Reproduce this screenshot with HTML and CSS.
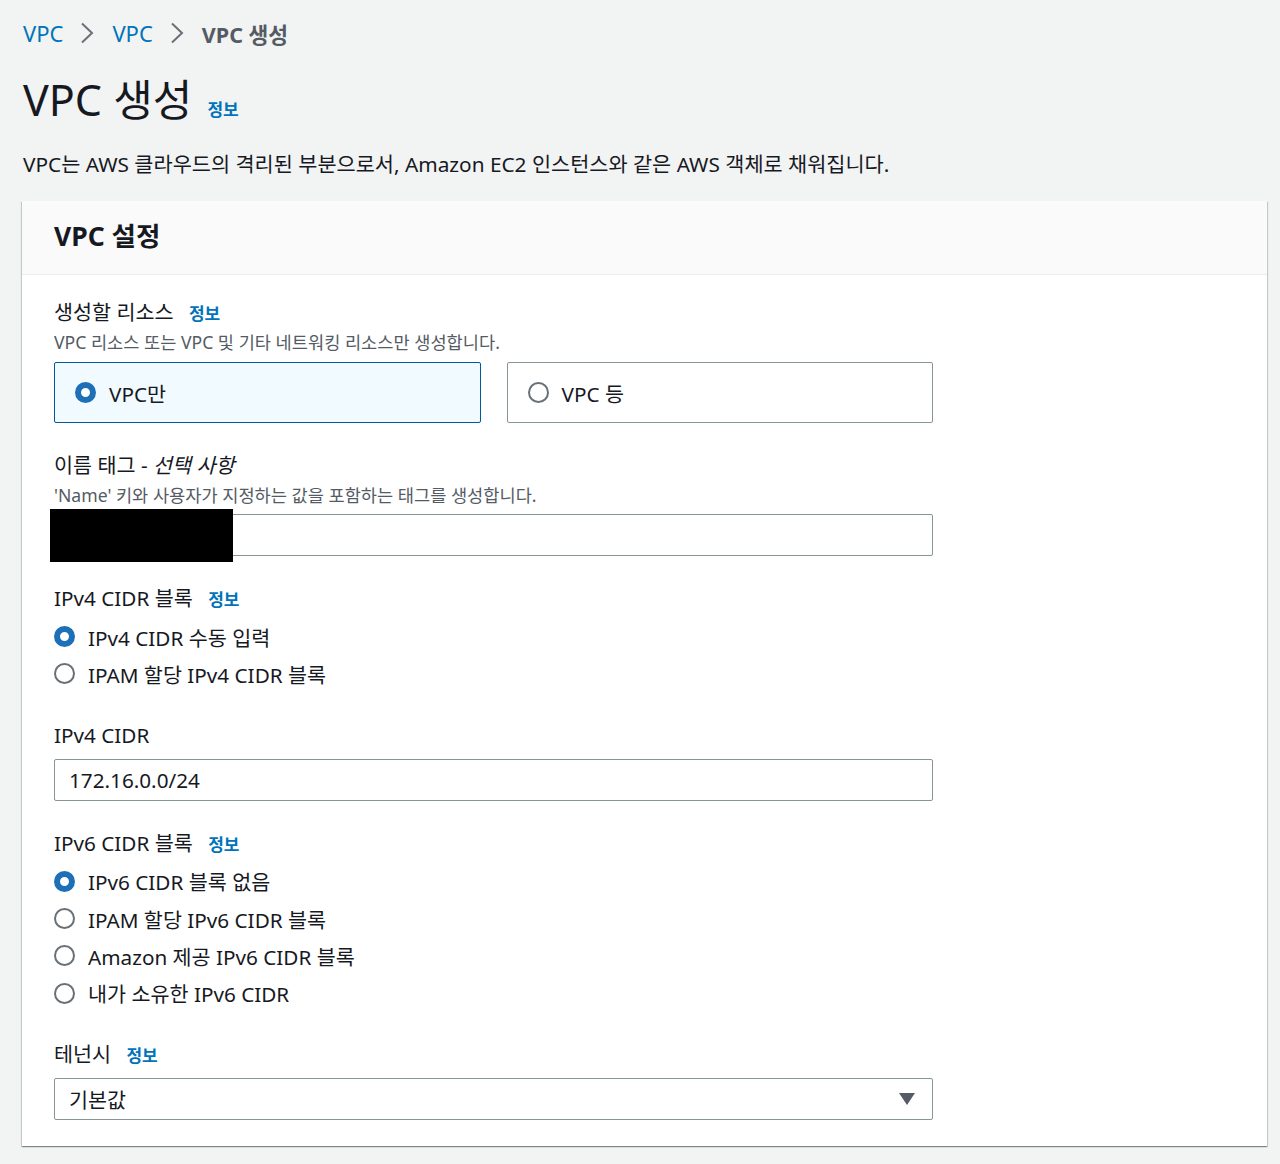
FILE: index.html
```html
<!DOCTYPE html>
<html lang="ko">
<head>
    <meta charset="UTF-8">
    <title>VPC 생성</title>
    <link rel="stylesheet" href="styles.css">
</head>
<body>
    <div class="breadcrumb">
        <a href="#">VPC</a>
        <svg class="chevron" width="14" height="24" viewBox="0 0 14 24"><path d="M2 2.5 L12 12 L2 21.5" fill="none" stroke="#687078" stroke-width="2"/></svg>
        <a href="#">VPC</a>
        <svg class="chevron" width="14" height="24" viewBox="0 0 14 24"><path d="M2 2.5 L12 12 L2 21.5" fill="none" stroke="#687078" stroke-width="2"/></svg>
        <span class="current">VPC 생성</span>
    </div>

    <h1 class="page-title">VPC 생성 <a class="info" href="#">정보</a></h1>
    <p class="page-desc">VPC는 AWS 클라우드의 격리된 부분으로서, Amazon EC2 인스턴스와 같은 AWS 객체로 채워집니다.</p>

    <div class="panel">
        <div class="panel-header">VPC 설정</div>
        <div class="panel-body">
            <div class="field">
                <div class="label">생성할 리소스 <a class="info" href="#">정보</a></div>
                <div class="desc">VPC 리소스 또는 VPC 및 기타 네트워킹 리소스만 생성합니다.</div>
                <div class="tiles">
                    <div class="tile selected"><span class="radio checked"></span>VPC만</div>
                    <div class="tile"><span class="radio"></span>VPC 등</div>
                </div>
            </div>

            <div class="field">
                <div class="label">이름 태그 - <i>선택 사항</i></div>
                <div class="desc">'Name' 키와 사용자가 지정하는 값을 포함하는 태그를 생성합니다.</div>
                <div class="input-wrap">
                    <div class="input"></div>
                    <div class="redact"></div>
                </div>
            </div>

            <div class="field">
                <div class="label">IPv4 CIDR 블록 <a class="info" href="#">정보</a></div>
                <div class="radio-group">
                    <div class="radio-row"><span class="radio checked"></span>IPv4 CIDR 수동 입력</div>
                    <div class="radio-row"><span class="radio"></span>IPAM 할당 IPv4 CIDR 블록</div>
                </div>
            </div>

            <div class="field">
                <div class="label">IPv4 CIDR</div>
                <div class="input spaced">172.16.0.0/24</div>
            </div>

            <div class="field">
                <div class="label">IPv6 CIDR 블록 <a class="info" href="#">정보</a></div>
                <div class="radio-group">
                    <div class="radio-row"><span class="radio checked"></span>IPv6 CIDR 블록 없음</div>
                    <div class="radio-row"><span class="radio"></span>IPAM 할당 IPv6 CIDR 블록</div>
                    <div class="radio-row"><span class="radio"></span>Amazon 제공 IPv6 CIDR 블록</div>
                    <div class="radio-row"><span class="radio"></span>내가 소유한 IPv6 CIDR</div>
                </div>
            </div>

            <div class="field">
                <div class="label">테넌시 <a class="info" href="#">정보</a></div>
                <div class="input spaced select">
                    기본값
                    <svg width="18" height="14" viewBox="0 0 18 14"><path d="M1 1 L17 1 L9 13 Z" fill="#545b64"/></svg>
                </div>
            </div>
        </div>
    </div>
</body>
</html>
```

FILE: styles.css
```css
body {
    margin: 0;
    padding: 21px 13px 20px 22px;
    background-color: #f2f3f3;
    color: #16191f;
    font-family: "Noto Sans", "Noto Sans CJK KR", sans-serif;
}
a {
    color: #0073bb;
    text-decoration: none;
}
.breadcrumb {
    display: flex;
    align-items: center;
    height: 24px;
    padding-left: 1px;
    font-size: 22px;
}
.chevron {
    margin: 0 18px 0 17px;
}
.breadcrumb .current {
    color: #545b64;
    font-weight: bold;
    font-size: 21.5px;
}
.page-title {
    height: 52px;
    margin: 29px 0 0 1px;
    font-size: 43px;
    font-weight: normal;
    line-height: 52px;
}
.page-title .info {
    margin-left: 4px;
}
.info {
    font-size: 17px;
    font-weight: bold;
    line-height: 1;
}
.page-desc {
    margin: 24px 0 0 1px;
    font-size: 20.8px;
    line-height: 28px;
}
.panel {
    margin-top: 23px;
    background-color: #fff;
    box-shadow: 0 1px 1px 0 rgba(0, 28, 36, 0.3), 1px 1px 1px 0 rgba(0, 28, 36, 0.15), -1px 1px 1px 0 rgba(0, 28, 36, 0.15);
}
.panel-header {
    box-sizing: border-box;
    height: 74px;
    display: flex;
    align-items: center;
    padding: 0 0 6px 32px;
    background-color: #fafafa;
    border-bottom: 1px solid #eaeded;
    font-size: 26.5px;
    font-weight: bold;
}
.panel-body {
    display: flex;
    flex-direction: column;
    gap: 28px;
    padding: 23px 32px 26px 32px;
    width: 879px;
}
.label {
    height: 28px;
    font-size: 20.7px;
    line-height: 28px;
}
.label .info {
    margin-left: 10px;
}
.desc {
    font-size: 17.6px;
    line-height: 24px;
    color: #545b64;
    margin-top: 4px;
}
.tiles {
    display: flex;
    gap: 26px;
    margin-top: 8px;
}
.tile {
    flex: 1;
    height: 59px;
    display: flex;
    align-items: center;
    gap: 13px;
    padding-left: 20px;
    border: 1px solid #879596;
    border-radius: 2px;
    font-size: 20.7px;
}
.tile.selected {
    border-color: #00599c;
    background-color: #f1faff;
}
.radio {
    display: inline-block;
    box-sizing: border-box;
    width: 21px;
    height: 21px;
    border: 2px solid #687078;
    border-radius: 50%;
    background-color: #fff;
    flex: none;
}
.radio.checked {
    border: 6px solid #1d6fb8;
}
.radio-group {
    margin-top: 6px;
}
.radio-row {
    height: 37.3px;
    display: flex;
    align-items: center;
    gap: 13px;
    font-size: 20.7px;
}
.input-wrap {
    position: relative;
    margin-top: 7px;
}
.input {
    box-sizing: border-box;
    height: 42px;
    border: 1px solid #879596;
    border-radius: 2px;
    display: flex;
    align-items: center;
    padding-left: 14px;
    font-size: 20.7px;
}
.input.spaced {
    margin-top: 10px;
}
.select {
    justify-content: space-between;
    padding-right: 16px;
}
.redact {
    position: absolute;
    left: -4px;
    top: -5px;
    width: 183px;
    height: 53px;
    background-color: #000;
}
```
